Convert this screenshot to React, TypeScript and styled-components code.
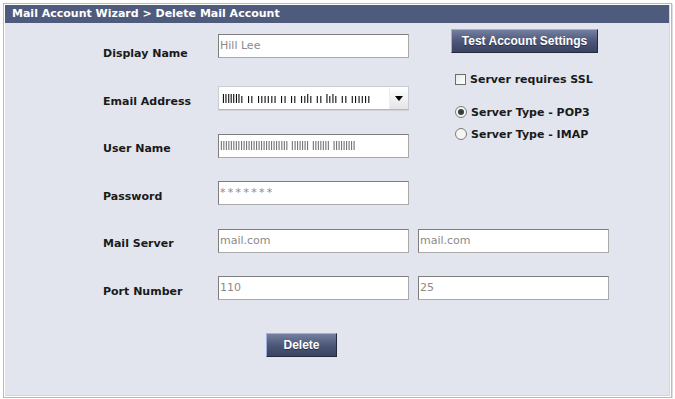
import React, { FC } from "react";
import styled, { createGlobalStyle } from "styled-components";

const GlobalStyle = createGlobalStyle`
  html, body {
    margin: 0;
    padding: 0;
    background: #ffffff;
  }
  body {
    font-family: "DejaVu Sans", Verdana, sans-serif;
  }
`;

type Row = {
  label: string;
  value: string;
  second?: string;
  kind?: "text" | "select" | "password" | "bars";
};

const rows: Row[] = [
  { label: "Display Name", value: "Hill Lee" },
  {
    label: "Email Address",
    value: "lllllllı ıı ıııııı ıı ıı ıılı ıı lılı ıı ıııııı",
    kind: "select",
  },
  {
    label: "User Name",
    value: "lllllllllllllllllllllllllll lllllll lllllll lllllllll",
    kind: "bars",
  },
  { label: "Password", value: "*******", kind: "password" },
  { label: "Mail Server", value: "mail.com", second: "mail.com" },
  { label: "Port Number", value: "110", second: "25" },
];

const App: FC = () => {
  return (
    <>
      <GlobalStyle />
      <Frame>
        <Panel>
          <Header>Mail Account Wizard &gt; Delete Mail Account</Header>
          <Body>
            <Form>
              <Options>
                <Button $width={147}>Test Account Settings</Button>
                <OptionRow $top={18}>
                  <CheckBox />
                  Server requires SSL
                </OptionRow>
                <OptionRow $top={17}>
                  <Radio $checked />
                  Server Type - POP3
                </OptionRow>
                <OptionRow $top={6}>
                  <Radio />
                  Server Type - IMAP
                </OptionRow>
              </Options>
              {rows.map((row, i) => (
                <React.Fragment key={row.label}>
                  <Label style={{ gridRow: i + 1 }}>{row.label}</Label>
                  <Cell style={{ gridRow: i + 1 }} $first={i === 0}>
                    {row.kind === "select" ? (
                      <Select>
                        <SelectText>{row.value}</SelectText>
                        <Arrow />
                      </Select>
                    ) : (
                      <Field $kind={row.kind}>{row.value}</Field>
                    )}
                  </Cell>
                  {row.second && (
                    <Cell style={{ gridRow: i + 1 }} $second>
                      <Field>{row.second}</Field>
                    </Cell>
                  )}
                </React.Fragment>
              ))}
            </Form>
            <Footer>
              <Button $width={71}>Delete</Button>
            </Footer>
          </Body>
        </Panel>
      </Frame>
    </>
  );
};

export default App;

const Frame = styled.div`
  margin: 3px 0 0 3px;
  width: 665px;
  height: 391px;
  border: 1px solid #b9b9b9;
  box-shadow: 1px 1px 0 #dedede;
  background: #ffffff;
  padding: 1px;
  box-sizing: content-box;
`;

const Panel = styled.div`
  width: 664px;
  height: 390px;
  background: #e2e5ee;
  border-right: 1px solid #d4d6dc;
  border-bottom: 1px solid #d4d6dc;
  display: flex;
  flex-direction: column;
`;

const Header = styled.div`
  height: 18px;
  background: #4f5b7c;
  color: #ffffff;
  font-weight: bold;
  font-size: 11px;
  line-height: 18px;
  padding-left: 7px;
  white-space: nowrap;
`;

const Body = styled.div`
  padding: 6.25px 0 0 98px;
  display: flex;
  flex-direction: column;
`;

const Form = styled.div`
  display: grid;
  grid-template-columns: 115px 191px 200px;
  grid-auto-rows: 47.5px;
`;

const Label = styled.div`
  grid-column: 1;
  align-self: center;
  font-weight: bold;
  font-size: 11px;
  color: #1a1a1a;
  line-height: 14px;
  margin-top: 2px;
  white-space: nowrap;
`;

const Cell = styled.div<{ $first?: boolean; $second?: boolean }>`
  grid-column: ${(p) => (p.$second ? 3 : 2)};
  padding-top: ${(p) => (p.$first ? 4.75 : 9.5)}px;
  padding-left: ${(p) => (p.$second ? 9 : 0)}px;
`;

const Field = styled.div<{ $kind?: Row["kind"] }>`
  height: 24px;
  box-sizing: border-box;
  border: 1px solid #7d7d7d;
  border-right-color: #a9a9a9;
  border-bottom-color: #a9a9a9;
  background: #ffffff;
  color: #8a8a8a;
  font-size: 11px;
  line-height: 22px;
  padding-left: 1px;
  white-space: nowrap;
  overflow: hidden;
  letter-spacing: ${(p) => (p.$kind === "password" ? "2.3px" : "0")};
  font-family: ${(p) =>
    p.$kind === "bars"
      ? '"Liberation Sans", Arial, sans-serif'
      : '"DejaVu Sans", Verdana, sans-serif'};
  ${(p) =>
    p.$kind === "bars"
      ? "font-size: 12px; letter-spacing: -0.15px; color: #6f6f6f; will-change: transform;"
      : ""}
`;

const Select = styled.div`
  height: 24px;
  box-sizing: border-box;
  border: 1px solid #c9ccd2;
  border-bottom-color: #b4b7bd;
  background: #ffffff;
  display: flex;
  align-items: center;
  justify-content: space-between;
  box-shadow: 0 1px 0 #cfd2d8;
`;

const SelectText = styled.span`
  font-family: "Liberation Sans", Arial, sans-serif;
  font-size: 13px;
  color: #111111;
  padding-left: 3px;
  white-space: nowrap;
  letter-spacing: -0.3px;
  will-change: transform;
`;

const Arrow = styled.span`
  width: 18px;
  height: 22px;
  flex: none;
  background: linear-gradient(#ffffff, #e4e4e4);
  border-left: 1px solid #eeeeee;
  display: flex;
  align-items: center;
  justify-content: center;
  &::after {
    content: "";
    border-left: 4.5px solid transparent;
    border-right: 4.5px solid transparent;
    border-top: 5px solid #000000;
  }
`;

const Options = styled.div`
  grid-column: 3;
  grid-row: 1 / span 3;
  padding-left: 42px;
  display: flex;
  flex-direction: column;
  align-items: flex-start;
`;

const Button = styled.button<{ $width: number }>`
  width: ${(p) => p.$width}px;
  height: 24px;
  box-sizing: border-box;
  padding: 0;
  border: 1px solid #232a3e;
  border-top-color: #9eb0e0;
  border-left-color: #9eb0e0;
  background: linear-gradient(#74809f, #4a5476 55%, #3a4360);
  color: #ffffff;
  font-family: "Liberation Sans", Arial, sans-serif;
  font-weight: bold;
  font-size: 12px;
  text-shadow: 0 1px 0 #2a3046;
  cursor: pointer;
`;

const OptionRow = styled.div<{ $top: number }>`
  margin-top: ${(p) => p.$top}px;
  height: 16px;
  display: flex;
  align-items: center;
  gap: 4px;
  margin-left: 4px;
  font-weight: bold;
  font-size: 11px;
  color: #1a1a1a;
  white-space: nowrap;
`;

const CheckBox = styled.span`
  width: 11px;
  height: 11px;
  box-sizing: border-box;
  border: 1px solid #6d6d6d;
  background: linear-gradient(135deg, #e8e8e8, #ffffff);
  flex: none;
`;

const Radio = styled.span<{ $checked?: boolean }>`
  width: 12px;
  height: 12px;
  box-sizing: border-box;
  border-radius: 50%;
  border: 1px solid #7a7a7a;
  background: #f4f4f4;
  flex: none;
  display: flex;
  align-items: center;
  justify-content: center;
  &::after {
    content: "";
    width: 6px;
    height: 6px;
    border-radius: 50%;
    background: ${(p) => (p.$checked ? "#3c3c3c" : "transparent")};
  }
`;

const Footer = styled.div`
  padding: 19px 0 0 163px;
`;
